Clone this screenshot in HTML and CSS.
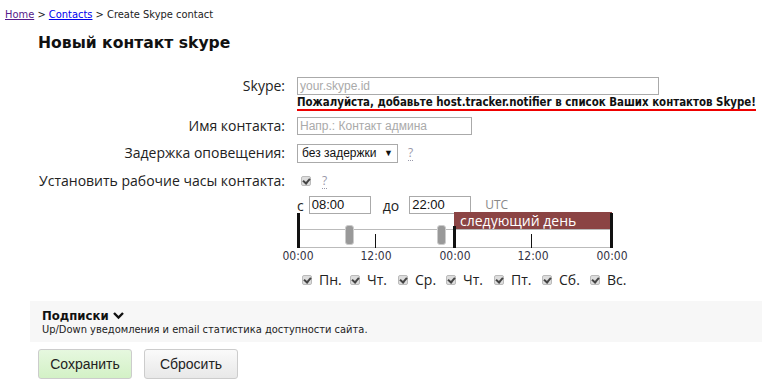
FILE: index.html
```html
<!DOCTYPE html>
<html>

<head>
	<title>Create Skype contact</title>
	<link rel="stylesheet" href="styles.css">
</head>

<body>
	<div class="crumbs">
		<a href="#" class="visited">Home</a> &gt; <a href="#">Contacts</a> &gt; Create Skype contact
	</div>
	<h1>Новый контакт skype</h1>

	<div class="form">
		<div class="label">Skype:</div>
		<div class="field field-skype">
			<div class="input input-skype">your.skype.id</div>
			<div class="warn">Пожалуйста, добавьте host.tracker.notifier в список Ваших контактов Skype!</div>
		</div>

		<div class="label">Имя контакта:</div>
		<div class="field">
			<div class="input input-name">Напр.: Контакт админа</div>
		</div>

		<div class="label">Задержка оповещения:</div>
		<div class="field row">
			<div class="select">без задержки <span class="arrow">&#9660;</span></div>
			<a href="#" class="help">?</a>
		</div>

		<div class="label">Установить рабочие часы контакта:</div>
		<div class="field row">
			<span class="cb"></span>
			<a href="#" class="help help-cb">?</a>
		</div>
	</div>

	<div class="hours">
		<div class="times">
			<span>с</span>
			<div class="input input-time from">08:00</div>
			<span class="to">до</span>
			<div class="input input-time">22:00</div>
			<span class="utc">UTC</span>
		</div>
		<div class="timeline">
			<div class="next">следующий день</div>
			<div class="track"></div>
			<div class="tick big" style="left: 0px"></div>
			<div class="tick" style="left: 78px"></div>
			<div class="tick big mid" style="left: 156px"></div>
			<div class="tick" style="left: 234px"></div>
			<div class="tick big end" style="left: 313px"></div>
			<div class="handle" style="left: 48px"></div>
			<div class="handle" style="left: 140px"></div>
			<span class="hour" style="left: 0px">00:00</span>
			<span class="hour" style="left: 78px">12:00</span>
			<span class="hour" style="left: 157px">00:00</span>
			<span class="hour" style="left: 235px">12:00</span>
			<span class="hour" style="left: 314px">00:00</span>
		</div>
		<div class="days">
			<span class="cb"></span><span class="day">Пн.</span>
			<span class="cb"></span><span class="day">Чт.</span>
			<span class="cb"></span><span class="day">Ср.</span>
			<span class="cb"></span><span class="day">Чт.</span>
			<span class="cb"></span><span class="day">Пт.</span>
			<span class="cb"></span><span class="day">Сб.</span>
			<span class="cb"></span><span class="day">Вс.</span>
		</div>
	</div>

	<div class="subs">
		<div class="subs-title">Подписки
			<svg width="11" height="9" viewBox="0 0 11 9"><path d="M1 2 L5.5 6.5 L10 2" fill="none" stroke="#111" stroke-width="2.4"/></svg>
		</div>
		<div class="subs-text">Up/Down уведомления и email статистика доступности сайта.</div>
	</div>

	<div class="buttons">
		<span class="btn btn-save">Сохранить</span>
		<span class="btn">Сбросить</span>
	</div>
</body>

</html>
```

FILE: styles.css
```css
body {
	margin: 0;
	font-family: "Open Sans", Arial, sans-serif;
	font-size: 14px;
	color: #222;
	background: #fff;
}

.crumbs {
	padding: 8px 0 0 5px;
	font-family: "DejaVu Sans Condensed", "DejaVu Sans", sans-serif;
	font-size: 11px;
	color: #222;
}

.crumbs a {
	color: #00e;
}

.crumbs a.visited {
	color: #551a8b;
}

h1 {
	margin: 13px 0 0 38px;
	font-family: "DejaVu Sans", sans-serif;
	font-size: 15.6px;
	font-weight: bold;
	color: #111;
}

.form {
	display: grid;
	grid-template-columns: 247px 1fr;
	column-gap: 12px;
	row-gap: 9px;
	margin: 25px 0 0 38px;
}

.label {
	text-align: right;
	line-height: 18px;
}

.field {
	min-height: 18px;
}

.field-skype {
	margin-bottom: -6px;
}

.row {
	display: flex;
	align-items: center;
	gap: 10px;
}

.input {
	box-sizing: border-box;
	height: 18px;
	border: 1px solid #aaa;
	padding: 0 2px;
	font-family: Arial, "Liberation Sans", sans-serif;
	font-size: 12px;
	line-height: 16px;
	color: #aaa;
}

.input-skype {
	width: 362px;
}

.input-name {
	width: 175px;
}

.warn {
	display: inline-block;
	white-space: nowrap;
	vertical-align: top;
	border-bottom: 2px solid #e00;
	font-family: "DejaVu Sans Condensed", "DejaVu Sans", sans-serif;
	font-size: 11.4px;
	font-weight: bold;
	color: #111;
	line-height: 14px;
}

.select {
	box-sizing: border-box;
	width: 101px;
	height: 19px;
	border: 1px solid #aaa;
	padding: 0 4px;
	font-family: Arial, "Liberation Sans", sans-serif;
	font-size: 12px;
	line-height: 17px;
	color: #111;
	display: flex;
	justify-content: space-between;
}

.arrow {
	font-size: 9px;
}

.help {
	color: #99a;
	text-decoration: none;
	border-bottom: 1px dotted #99a;
	font-size: 12px;
	line-height: 14px;
}

.help-cb {
	margin-left: 1px;
}

.cb {
	box-sizing: border-box;
	display: inline-block;
	width: 10px;
	height: 10px;
	border: 1px solid #bbb;
	border-radius: 2px;
	background: #ddd;
	position: relative;
	margin-left: 4px;
}

.cb::after {
	content: "";
	position: absolute;
	left: 2px;
	top: 0px;
	width: 3px;
	height: 5px;
	border: solid #444;
	border-width: 0 2px 2px 0;
	transform: rotate(40deg);
}

.hours {
	margin: 6px 0 0 297px;
}

.times {
	display: flex;
	align-items: center;
	gap: 0;
	height: 18px;
}

.input-time {
	width: 62px;
	color: #111;
	font-size: 13px;
	margin-left: 3px;
}

.input-time.from {
	margin-left: 5px;
}

.to {
	margin-left: 12px;
	margin-right: 7px;
}

.utc {
	margin-left: 14px;
	color: #888;
	font-size: 12px;
	line-height: 14px;
}

.timeline {
	position: relative;
	width: 316px;
	height: 50px;
	margin-top: -2px;
	font-family: "DejaVu Sans Condensed", "DejaVu Sans", sans-serif;
	font-size: 12px;
}

.next {
	position: absolute;
	left: 157px;
	top: 0;
	width: 158px;
	height: 18px;
	background: #8b4444;
	color: #fff;
	font-family: "Open Sans", Arial, sans-serif;
	font-size: 14px;
	line-height: 17px;
	padding-left: 6px;
	box-sizing: border-box;
}

.track {
	position: absolute;
	left: 1px;
	top: 17px;
	width: 314px;
	height: 19px;
	border-top: 1px solid #bbb;
	border-bottom: 1px solid #bbb;
	box-sizing: border-box;
}

.tick {
	position: absolute;
	top: 22px;
	width: 1px;
	height: 14px;
	background: #111;
}

.tick.big {
	width: 3px;
	top: 1px;
	height: 35px;
}

.tick.mid {
	top: 14px;
	height: 22px;
}

.handle {
	position: absolute;
	top: 13px;
	width: 9px;
	height: 20px;
	border-radius: 3px;
	background: #999;
	border: 1px solid #ccc;
	box-sizing: border-box;
}

.hour {
	position: absolute;
	top: 37px;
	transform: translateX(-50%);
	margin-left: 1px;
	color: #334;
}

.days {
	display: flex;
	align-items: center;
	margin-top: 8px;
	padding-left: 5px;
}

.days .cb {
	margin-left: 0;
}

.day {
	margin-left: 7px;
	width: 31px;
}

.subs {
	margin: 12px 3px 0 30px;
	padding: 7px 12px 6px;
	background: #f7f7f7;
}

.subs-title {
	font-family: "DejaVu Sans Condensed", "DejaVu Sans", sans-serif;
	font-size: 13px;
	font-weight: bold;
	color: #111;
}

.subs-text {
	font-family: "DejaVu Sans Condensed", "DejaVu Sans", sans-serif;
	font-size: 11px;
	color: #222;
}

.buttons {
	display: flex;
	gap: 12px;
	margin: 7px 0 0 38px;
}

.btn {
	box-sizing: border-box;
	display: inline-block;
	width: 94px;
	height: 30px;
	border: 1px solid #ccc;
	border-radius: 3px;
	background: linear-gradient(#fafafa, #e8e8e8);
	text-align: center;
	line-height: 28px;
	font-family: "Liberation Sans", Arial, sans-serif;
	font-size: 14px;
	color: #222;
}

.btn-save {
	background: linear-gradient(#e6f8df, #d3f1c6);
}
```
